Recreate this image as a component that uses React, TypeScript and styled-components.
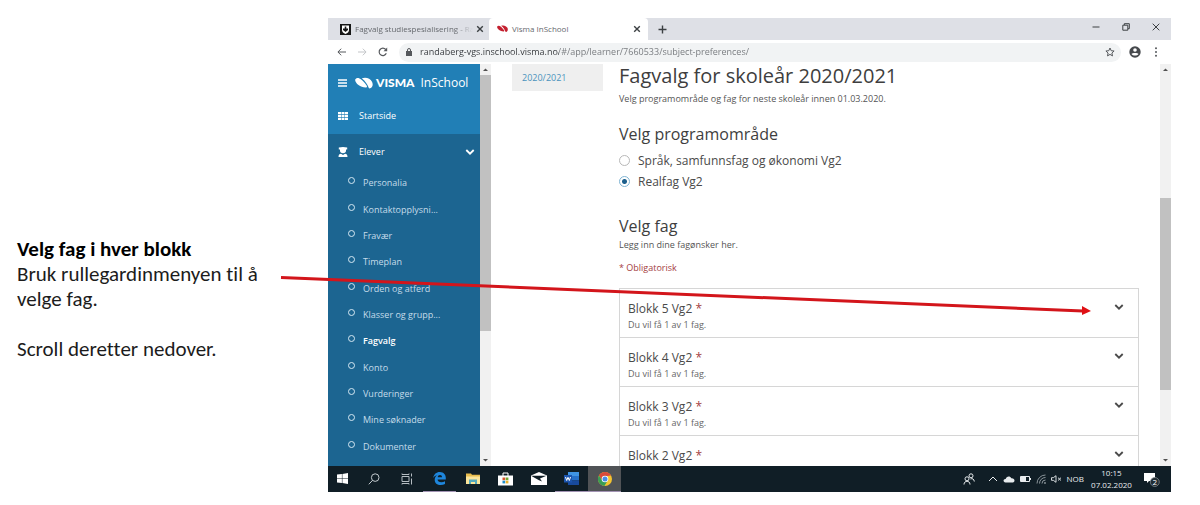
import React, { useState } from "react";
import styled, { createGlobalStyle, css } from "styled-components";

const GlobalStyle = createGlobalStyle`
  *, *::before, *::after { box-sizing: border-box; }
  body { margin: 0; background: #fff; font-family: "Open Sans", "Liberation Sans", sans-serif; }
  button, input { font-family: inherit; }
  button { border: 0; padding: 0; background: none; color: inherit; cursor: pointer; }
  h1, h2, h3, p, ul, fieldset { margin: 0; padding: 0; border: 0; font-weight: 400; }
  ul { list-style: none; }
  svg { display: block; flex: none; }
`;

const Slide = styled.main`
  position: relative;
  display: flex;
  align-items: center;
  padding: 18px 29px 13px 17px;
`;

const Note = styled.section`
  flex: 0 0 311px;
  padding: 89px 50px 0 0;
  font-family: Carlito, Lato, sans-serif;
  font-size: 21px;
  line-height: 25px;
  font-variant-ligatures: none;
  color: #1c1c1c;
  align-self: stretch;
  display: flex;
  flex-direction: column;
  justify-content: center;
`;

const NoteTitle = styled.h2`
  && { font-weight: 700; }
  font-size: 21px;
  line-height: 25px;
  color: #000;
`;

const NoteText = styled.p`
  & + & { margin-top: 25px; }
`;

const Arrow = styled.svg`
  position: absolute;
  left: 280px;
  right: 109px;
  top: 275px;
  width: calc(100% - 389px);
  height: 42px;
  pointer-events: none;
`;

const Screen = styled.section`
  flex: 1;
  min-width: 0;
  display: flex;
  flex-direction: column;
`;

/* Browser chrome */

const TabStrip = styled.div`
  display: flex;
  height: 22px;
  background: #dee0e6;
  color: #3c4043;
`;

const Tab = styled.div<{ $active?: boolean }>`
  flex: 0 0 ${(p) => (p.$active ? 159 : 161)}px;
  min-width: 0;
  display: flex;
  align-items: center;
  padding: 0 ${(p) => (p.$active ? 4 : 2)}px 0 ${(p) => (p.$active ? 8 : 12)}px;
  border-radius: 4px 4px 0 0;
  background: ${(p) => (p.$active ? "#fff" : "transparent")};
`;

const TabTitle = styled.button<{ $fade?: boolean }>`
  flex: 1;
  min-width: 0;
  padding-left: 4px;
  overflow: hidden;
  white-space: nowrap;
  text-align: left;
  font-size: 8px;
  line-height: 14px;
  color: #66696e;
  ${(p) =>
    p.$fade &&
    css`
      mask-image: linear-gradient(to right, #000 85%, transparent);
    `}
`;

const IconButton = styled.button`
  flex: none;
  display: flex;
  align-items: center;
  justify-content: center;
  width: 14px;
  height: 14px;
`;

const NewTab = styled(IconButton)`
  margin: 4px 0 0 7px;
`;

const WindowControls = styled.div`
  margin-left: auto;
  display: flex;
  align-items: center;
  gap: 16px;
  padding: 0 8px 4px 0;
`;

const Toolbar = styled.div`
  display: flex;
  align-items: center;
  gap: 7px;
  height: 24px;
  padding: 0 8px 0 6px;
  background: #fff;
  color: #55585c;
`;

const AddressBar = styled.label`
  flex: 1;
  display: flex;
  align-items: center;
  gap: 8px;
  height: 19px;
  margin-left: 2px;
  padding: 0 4px 0 7px;
  border-radius: 10px;
  background: #f1f3f4;
`;

const Address = styled.input`
  flex: 1;
  min-width: 0;
  border: 0;
  padding: 0;
  outline: 0;
  font-size: 9px;
  line-height: 14px;
  color: transparent;
  background: linear-gradient(to right, #34373b 139px, #74777b 139px);
  background-clip: text;
`;

/* Page */

const Viewport = styled.div`
  display: flex;
  background: #fff;
`;

const Sidebar = styled.nav`
  flex: 0 0 152px;
  display: flex;
  flex-direction: column;
  background: #1c6591;
  color: #fff;
`;

const SidebarTop = styled.div`
  background: #217fb6;
`;

const Brand = styled.div`
  display: flex;
  align-items: center;
  height: 38px;
  padding-left: 7px;
`;

const Logo = styled.span`
  display: flex;
  align-items: center;
  gap: 3px;
  margin: 0 6px 0 6px;
  font-family: Lato, sans-serif;
  font-size: 12px;
  font-weight: 900;
  line-height: 16px;
`;

const Product = styled.span`
  font-size: 12px;
  line-height: 16px;
`;

const MainLink = styled.a`
  display: flex;
  align-items: center;
  gap: 11px;
  height: 32px;
  padding: 0 5px 4px 10px;
  font-size: 9px;
  line-height: 14px;
  color: #fff;
  text-decoration: none;
`;

const SectionToggle = styled.button`
  display: flex;
  align-items: center;
  gap: 11px;
  height: 35px;
  padding: 0 5px 0 10px;
  font-size: 9px;
  line-height: 14px;
  text-align: left;
  span { flex: 1; }
`;

const SubList = styled.ul`
  flex: 1;
  display: flex;
  flex-direction: column;
  padding: 1px 0 6px;
`;

const SubItem = styled.li`
  flex: 1;
  display: flex;
  align-items: center;
`;

const SubLink = styled.a<{ $current?: boolean }>`
  display: flex;
  gap: 8px;
  padding-left: 20px;
  font-size: 9px;
  line-height: 14px;
  font-weight: ${(p) => (p.$current ? 600 : 400)};
  color: ${(p) => (p.$current ? "#fff" : "#c5dcea")};
  text-decoration: none;
  &::before {
    content: "";
    width: 7px;
    height: 7px;
    margin-top: 1px;
    border: 1px solid #d5e8f3;
    border-radius: 50%;
  }
`;

const ScrollTrack = styled.div`
  flex: 0 0 11px;
  display: flex;
  flex-direction: column;
  background: #f1f1f1;
  color: #505050;
`;

const ScrollThumb = styled.div<{ $size: number }>`
  flex: ${(p) => p.$size};
  background: #c1c1c1;
`;

const ScrollGap = styled.div<{ $size: number }>`
  flex: ${(p) => p.$size};
`;

const ScrollArrow = styled.svg`
  width: 11px;
  height: 11px;
`;

const Page = styled.div`
  flex: 1;
  min-width: 0;
  display: flex;
  align-items: flex-start;
  gap: 16px;
  padding: 0 21px;
`;

const YearLink = styled.a`
  flex: 0 0 91px;
  padding: 7px 10px 6px;
  background: #efefef;
  font-size: 9px;
  line-height: 14px;
  color: #4b93bd;
  text-decoration: none;
`;

const Content = styled.div`
  flex: 1;
  min-width: 0;
  color: #4a4a4a;
`;

const PageTitle = styled.h1`
  font-size: 20px;
  line-height: 24px;
  color: #3e3e3e;
`;

const Small = styled.p<{ $required?: boolean }>`
  font-size: 9px;
  line-height: 14px;
  color: ${(p) => (p.$required ? "#a4403f" : "#555")};
  & + & { margin-top: 9px; }
`;

const Lead = styled.p`
  font-size: 9px;
  line-height: 14px;
  color: #555;
  padding: 4px 0 16px;
`;

const SectionTitle = styled.h2`
  font-size: 16px;
  line-height: 24px;
  color: #3e3e3e;
`;

const Options = styled.fieldset`
  && { padding: 4px 0 22px; }
`;

const Option = styled.label`
  display: flex;
  align-items: center;
  gap: 8px;
  height: 21px;
  font-size: 12px;
  line-height: 16px;
`;

const Radio = styled.input`
  appearance: none;
  width: 11px;
  height: 11px;
  margin: 0;
  border: 1px solid #b8b8b8;
  border-radius: 50%;
  background: #fff;
  &:checked {
    border-color: #7fb4d3;
    background: radial-gradient(circle, #1c5f8c 2px, #fff 3px);
  }
`;

const Blocks = styled.div`
  margin-top: 13px;
  border: 1px solid #d6d6d6;
  border-bottom: 0;
`;

const Block = styled.button`
  display: flex;
  justify-content: space-between;
  align-items: flex-start;
  width: 100%;
  padding: 12px 14px 5px 8px;
  text-align: left;
  & + & { border-top: 1px solid #d6d6d6; }
  &:last-child { padding-bottom: 2px; }
`;

const BlockName = styled.span`
  display: block;
  font-size: 12px;
  line-height: 16px;
`;

const Star = styled.span`
  color: #a4403f;
`;

const BlockHint = styled.span`
  display: block;
  padding-top: 1px;
  font-size: 9px;
  line-height: 14px;
  color: #666;
`;

/* Taskbar */

const Taskbar = styled.footer`
  display: flex;
  justify-content: space-between;
  height: 26px;
  background: #101e26;
  color: #e8ecee;
`;

const Apps = styled.div`
  display: flex;
`;

const AppButton = styled.button<{ $state?: "open" | "active" }>`
  display: flex;
  align-items: center;
  justify-content: center;
  width: 33px;
  border-bottom: 1px solid ${(p) => (p.$state ? "#a394b4" : "transparent")};
  background: ${(p) => (p.$state === "active" ? "#505356" : "transparent")};
  &:first-child { width: 29px; }
`;

const Tray = styled.div`
  display: flex;
  align-items: center;
  gap: 5px;
  padding-right: 11px;
  font-size: 8px;
  line-height: 12px;
  svg:first-child { margin-right: 8px; }
`;

const Clock = styled.time`
  width: 45px;
  text-align: center;
  margin-right: 5px;
  span { display: block; }
`;

const Chevron = () => (
  <svg width="10" height="12" viewBox="0 -2 10 12" fill="none" stroke="currentColor" strokeWidth="1.8">
    <path d="M1.3 2 5 5.7 8.700 2" />
  </svg>
);

const Swirl = ({ width, color }: { width: number; color: string }) => (
  <svg width={width} height={(width * 12) / 18} viewBox="0 0 18 12" fill={color}>
    <path d="M.1 2.800C2-.4 5.800.6 11.600 8.500c.8 1.200.3 2.100-1 2C5.500 10.300.3 6.800.1 2.800Z" />
    <path d="M6.800 1.200C11-.2 15.200 1.200 17 4.700c1.400 2.900.6 5.500-1.800 6.600-.8.300-1.200 0-1.500-.6C12.500 7.600 10.500 4 6.800 1.200Z" />
  </svg>
);

const Close = () => (
  <svg width="8" height="8" viewBox="0 0 8 8" stroke="currentColor" strokeWidth="1.4">
    <path d="m1.200 1.200 5.600 5.600M6.800 1.200 1.200 6.800" />
  </svg>
);

const Scrollbar = ({ before, size, after }: { before: number; size: number; after: number }) => (
  <ScrollTrack>
    <ScrollArrow viewBox="0 0 11 11" fill="currentColor"><path d="m3 7 2.500-2.500L8 7Z" /></ScrollArrow>
    <ScrollGap $size={before} />
    <ScrollThumb $size={size} />
    <ScrollGap $size={after} />
    <ScrollArrow viewBox="0 0 11 11" fill="currentColor"><path d="m3 4 2.500 2.500L8 4Z" /></ScrollArrow>
  </ScrollTrack>
);

const subItems = [
  "Personalia", "Kontaktopplysni...", "Fravær", "Timeplan", "Orden og atferd", "Klasser og grupp...",
  "Fagvalg", "Konto", "Vurderinger", "Mine søknader", "Dokumenter",
];

const programmes = ["Språk, samfunnsfag og økonomi Vg2", "Realfag Vg2"];

const blocks = [
  { name: "Blokk 5 Vg2", hint: "Du vil få 1 av 1 fag." },
  { name: "Blokk 4 Vg2", hint: "Du vil få 1 av 1 fag." },
  { name: "Blokk 3 Vg2", hint: "Du vil få 1 av 1 fag." },
  { name: "Blokk 2 Vg2" },
];

const Browser = () => (
  <>
    <TabStrip>
      <Tab>
        <svg width="11" height="11" viewBox="0 0 11 11">
          <path fill="#161616" d="M0 0h11v11H0Z" />
          <path fill="#fff" d="M2 1.500h7V6c0 2-1.500 3.200-3.500 4C3.500 9.200 2 8 2 6Z" />
          <path fill="#161616" d="M4.700 2.500h1.600v2H8V6L5.500 8 3 6V4.500h1.700Z" />
        </svg>
        <TabTitle $fade>Fagvalg studiespesialisering - Ra</TabTitle>
        <IconButton aria-label="Lukk fane"><Close /></IconButton>
      </Tab>
      <Tab $active>
        <Swirl width={11} color="#c4202f" />
        <TabTitle>Visma InSchool</TabTitle>
        <IconButton aria-label="Lukk fane"><Close /></IconButton>
      </Tab>
      <NewTab aria-label="Ny fane">
        <svg width="9" height="9" viewBox="0 0 9 9" stroke="currentColor" strokeWidth="1.4"><path d="M4.500.5v8M.5 4.500h8" /></svg>
      </NewTab>
      <WindowControls>
        <IconButton aria-label="Minimer">
          <svg width="8" height="8" viewBox="0 0 8 8" stroke="currentColor"><path d="M.5 4h7" /></svg>
        </IconButton>
        <IconButton aria-label="Gjenopprett">
          <svg width="8" height="8" viewBox="0 0 8 8" stroke="currentColor" fill="none"><path d="M.8 2.200h5v5h-5ZM2.300 2V.7h5v5H6" /></svg>
        </IconButton>
        <IconButton aria-label="Lukk">
          <svg width="8" height="8" viewBox="0 0 8 8" stroke="currentColor"><path d="m.7.7 6.600 6.600M7.300.7.7 7.300" /></svg>
        </IconButton>
      </WindowControls>
    </TabStrip>
    <Toolbar>
      <IconButton aria-label="Tilbake">
        <svg width="9" height="8" viewBox="0 0 9 8" stroke="currentColor" fill="none"><path d="M9 4H1M4.200.7.900 4l3.300 3.300" /></svg>
      </IconButton>
      <IconButton aria-label="Frem">
        <svg width="9" height="8" viewBox="0 0 9 8" stroke="#c3c5c8" fill="none"><path d="M0 4h8M4.800.7 8.100 4 4.800 7.300" /></svg>
      </IconButton>
      <IconButton aria-label="Last inn på nytt">
        <svg width="10" height="10" viewBox="0 0 10 10"><path d="M8.300 6.300A3.700 3.700 0 1 1 7.700 2.500" stroke="currentColor" strokeWidth="1.200" fill="none" /><path fill="currentColor" d="M9.200.6v3.700H5.500Z" /></svg>
      </IconButton>
      <AddressBar>
        <svg width="6" height="8" viewBox="0 0 6 8"><path fill="currentColor" d="M0 3h6v5H0Z" /><path d="M1.500 3V2a1.500 1.500 0 0 1 3 0v1" stroke="currentColor" fill="none" /></svg>
        <Address aria-label="Adresse" defaultValue="randaberg-vgs.inschool.visma.no/#/app/learner/7660533/subject-preferences/" />
        <IconButton type="button" aria-label="Bokmerk">
          <svg width="10" height="10" viewBox="0 0 10 10" stroke="currentColor" fill="none"><path d="m5 1 1.200 2.700 2.900.3-2.200 2 .6 2.900L5 7.400 2.500 8.900 3.100 6 .9 4l2.900-.3Z" /></svg>
        </IconButton>
      </AddressBar>
      <IconButton aria-label="Profil">
        <svg width="12" height="12" viewBox="0 0 12 12"><circle cx="6" cy="6" r="5.700" fill="#46494d" /><circle cx="6" cy="4" r="1.800" fill="#fff" /><path fill="#fff" d="M2.500 8C3.500 6.700 8.500 6.700 9.500 8 8 10 4 10 2.500 8Z" /></svg>
      </IconButton>
      <IconButton aria-label="Meny">
        <svg width="2" height="10" viewBox="0 0 2 10" fill="currentColor"><circle cx="1" cy="1.200" r="1" /><circle cx="1" cy="5" r="1" /><circle cx="1" cy="8.800" r="1" /></svg>
      </IconButton>
    </Toolbar>
  </>
);

const SideNav = () => (
  <Sidebar>
    <SidebarTop>
      <Brand>
        <IconButton aria-label="Vis meny">
          <svg width="9" height="8" viewBox="0 0 9 8" stroke="currentColor" strokeWidth="1.300"><path d="M0 1h9M0 4h9M0 7h9" /></svg>
        </IconButton>
        <Logo><Swirl width={18} color="#fff" />VISMA</Logo>
        <Product>InSchool</Product>
      </Brand>
      <MainLink href="#startside">
        <svg width="10" height="8" viewBox="0 0 10 8" fill="currentColor">
          {[0, 3.5, 7].map((x) => [0, 3, 6].map((y) => <rect key={`${x}-${y}`} x={x} y={y} width="3" height="2.3" />))}
        </svg>
        Startside
      </MainLink>
    </SidebarTop>
    <SectionToggle aria-expanded="true">
      <svg width="10" height="10" viewBox="0 0 10 10" fill="currentColor">
        <path d="M.8.600 5 0l4.200.6v2H8V4c0 1.200-1.200 2.300-3 2.300S2 5.200 2 4V2.600H.8Z" />
        <path d="M.5 10c0-2.500 1-3.300 2.500-3.300L5 8l2-1.300C8.500 6.700 9.500 7.500 9.500 10Z" />
      </svg>
      <span>Elever</span>
      <Chevron />
    </SectionToggle>
    <SubList>
      {subItems.map((item) => (
        <SubItem key={item}>
          <SubLink href="#elever" $current={item === "Fagvalg"}>{item}</SubLink>
        </SubItem>
      ))}
    </SubList>
  </Sidebar>
);

const SubjectForm = () => {
  const [programme, setProgramme] = useState(programmes[1]);
  return (
    <Content>
      <PageTitle>Fagvalg for skoleår 2020/2021</PageTitle>
      <Lead>Velg programområde og fag for neste skoleår innen 01.03.2020.</Lead>
      <SectionTitle id="programme">Velg programområde</SectionTitle>
      <Options aria-labelledby="programme">
        {programmes.map((p) => (
          <Option key={p}>
            <Radio type="radio" name="programme" checked={programme === p} onChange={() => setProgramme(p)} />
            {p}
          </Option>
        ))}
      </Options>
      <SectionTitle>Velg fag</SectionTitle>
      <Small>Legg inn dine fagønsker her.</Small>
      <Small $required>* Obligatorisk</Small>
      <Blocks>
        {blocks.map((b) => (
          <Block key={b.name} aria-expanded="false">
            <span>
              <BlockName>{b.name} <Star>*</Star></BlockName>
              {b.hint && <BlockHint>{b.hint}</BlockHint>}
            </span>
            <Chevron />
          </Block>
        ))}
      </Blocks>
    </Content>
  );
};

const WindowsBar = () => (
  <Taskbar>
    <Apps>
      <AppButton aria-label="Start">
        <svg width="11" height="11" viewBox="0 0 11 11" fill="#fff"><path d="M0 1.600 4.900 1v4.200H0ZM5.400.9 11 0v5.200H5.400ZM0 5.800h4.900V10L0 9.400ZM5.400 5.800H11V11l-5.600-.9Z" /></svg>
      </AppButton>
      <AppButton aria-label="Søk">
        <svg width="12" height="12" viewBox="0 0 12 12" fill="none" stroke="#c3cace"><circle cx="7.200" cy="4.600" r="3.800" /><path d="M4.500 7.400.8 11.300" /></svg>
      </AppButton>
      <AppButton aria-label="Oppgavevisning">
        <svg width="12" height="12" viewBox="0 0 12 12" fill="none" stroke="#b5bdc2"><path d="M1 3.500h7v5H1ZM1 .5v1h7v-1M1 11.500v-1h7v1M10.500.5v3M10.500 5.500v6" /></svg>
      </AppButton>
      <AppButton aria-label="Edge" $state="open">
        <svg width="13" height="13" viewBox="0 0 13 13" fill="#1e86dc"><path d="M.3 5.900C.8 2.300 3.300 0 6.800 0c4 0 6 3 6 6v1.600H4.600c.1 1.700 1.500 2.700 3.700 2.700 1.400 0 2.700-.4 3.700-1v2.800c-1.200.6-2.700.9-4.300.9-3.600 0-6-2-6-5.300 0-2 1-3.600 2.800-4.600C2.700 3.600 1.200 4.400.3 5.900Zm4.400-.6H9C9 3.800 8.200 3 7 3c-1.200 0-2.100.9-2.300 2.300Z" /></svg>
      </AppButton>
      <AppButton aria-label="Filutforsker">
        <svg width="14" height="12" viewBox="0 0 14 12"><path fill="#e8bd4e" d="M0 .5h5l1 1.300h8V11H0Z" /><path fill="#fbe59a" d="M0 3.500h14V11H0Z" /><path fill="#55aabd" d="M3 6.500h8V11H9V9H5v2H3Z" /></svg>
      </AppButton>
      <AppButton aria-label="Store">
        <svg width="15" height="14" viewBox="0 0 15 14"><path fill="#fff" d="M0 3.500h15V13.500H0Z" /><path d="M5 4V1h5v3" fill="none" stroke="#fff" /><path fill="#d8552c" d="M4.500 5.500h2.700v2.700H4.500Z" /><path fill="#73a62e" d="M7.700 5.500h2.700v2.700H7.700Z" /><path fill="#1d8dcc" d="M4.500 8.700h2.700v2.700H4.500Z" /><path fill="#e9b12a" d="M7.700 8.700h2.700v2.700H7.700Z" /></svg>
      </AppButton>
      <AppButton aria-label="E-post">
        <svg width="16" height="13" viewBox="0 0 16 13"><path fill="#fff" d="M0 3.500 8 0l8 3.500V13H0Z" /><path fill="#101e26" d="m0 3.700 15.500 0L9 6.500l2 3-3-1.200Z" /></svg>
      </AppButton>
      <AppButton aria-label="Word" $state="open">
        <svg width="15" height="13" viewBox="0 0 15 13"><path fill="#3f94e3" d="M4 0h11v4H4Z" /><path fill="#2670c8" d="M4 4h11v4.500H4Z" /><path fill="#184a9c" d="M4 8.500h11V13H4Z" /><path fill="#1c55ae" d="M0 3h8v7.500H0Z" /><path d="m1.500 5 1.200 3.500L4 5.300l1.300 3.200L6.500 5" stroke="#fff" fill="none" /></svg>
      </AppButton>
      <AppButton aria-label="Chrome" $state="active">
        <svg width="14" height="14" viewBox="0 0 14 14"><circle cx="7" cy="7" r="7" fill="#f4c430" /><path fill="#d94a3b" d="M.9 3.600A7 7 0 0 1 13.100 3.600L7 4.200 4.300 8.600Z" /><path fill="#3a9d55" d="M.9 3.500A7 7 0 0 0 6.400 14L9.700 8.600 4.300 8.500Z" /><circle cx="7" cy="7" r="3.300" fill="#fff" /><circle cx="7" cy="7" r="2.500" fill="#4a8be8" /></svg>
      </AppButton>
    </Apps>
    <Tray>
      <svg width="12" height="12" viewBox="0 0 12 12" fill="none" stroke="currentColor"><circle cx="8" cy="2.800" r="2" /><circle cx="4" cy="5.800" r="2" /><path d="M1 11.500C1 7.200 7 7.200 7 11.500M7.500 6C9.500 5 11 6.200 11.300 8.500" /></svg>
      <svg width="10" height="8" viewBox="0 0 10 8" fill="none" stroke="currentColor"><path d="M1 6 5 2l4 4" /></svg>
      <svg width="12" height="8" viewBox="0 0 12 8" fill="currentColor"><path d="M2.500 7.500C-.5 7 .3 3.700 2.700 4 3.300.8 7.300.6 8.300 3.200c3.500-.4 4.300 3.500 1.500 4.300Z" /></svg>
      <svg width="11" height="8" viewBox="0 0 11 8"><path d="M.5 1.500h9v5h-9Z" fill="none" stroke="currentColor" /><path d="M1 2h5v4H1ZM10 3h1v2h-1Z" fill="currentColor" /></svg>
      <svg width="10" height="10" viewBox="0 0 10 10" fill="none" stroke="#99a3a8" strokeWidth=".9"><path d="M1 9.500A8.500 8.500 0 0 1 9.500 1M3.500 9.500a6 6 0 0 1 6-6M6 9.500A3.500 3.500 0 0 1 9.500 6" /><circle cx="9" cy="9" r=".6" /></svg>
      <svg width="11" height="8" viewBox="0 0 11 8" fill="none" stroke="currentColor" strokeWidth=".9"><path d="M.5 2.700h1.800L5 .7v6.600L2.300 5.300H.5ZM7 2.700l3 2.800M10 2.700 7 5.500" /></svg>
      <span>NOB</span>
      <Clock dateTime="2020-02-07T10:15"><span>10:15</span><span>07.02.2020</span></Clock>
      <svg width="16" height="15" viewBox="0 0 16 15"><path fill="#fff" d="M0 1h11v8H5L3 11V9H0Z" /><circle cx="10.800" cy="10" r="4.500" fill="#222d33" stroke="#8a9296" strokeWidth=".7" /><text x="10.800" y="12.800" fontSize="8" textAnchor="middle" fill="#fff">2</text></svg>
    </Tray>
  </Taskbar>
);

export default function App() {
  return (
    <>
      <GlobalStyle />
      <Slide>
        <Note>
          <NoteTitle>Velg fag i hver blokk</NoteTitle>
          <NoteText>Bruk rullegardinmenyen til å velge fag.</NoteText>
          <NoteText>Scroll deretter nedover.</NoteText>
        </Note>
        <Screen>
          <Browser />
          <Viewport>
            <SideNav />
            <Scrollbar before={0} size={256} after={124} />
            <Page>
              <YearLink href="#2020-2021">2020/2021</YearLink>
              <SubjectForm />
            </Page>
            <Scrollbar before={123} size={192} after={65} />
          </Viewport>
          <WindowsBar />
        </Screen>
        <Arrow viewBox="0 0 811 42" preserveAspectRatio="none" aria-hidden="true">
          <path d="M1 2.500 803 36" stroke="#d3151b" strokeWidth="3" />
          <path d="m802 31 9 5-9 4Z" fill="#e01014" />
        </Arrow>
      </Slide>
    </>
  );
}
